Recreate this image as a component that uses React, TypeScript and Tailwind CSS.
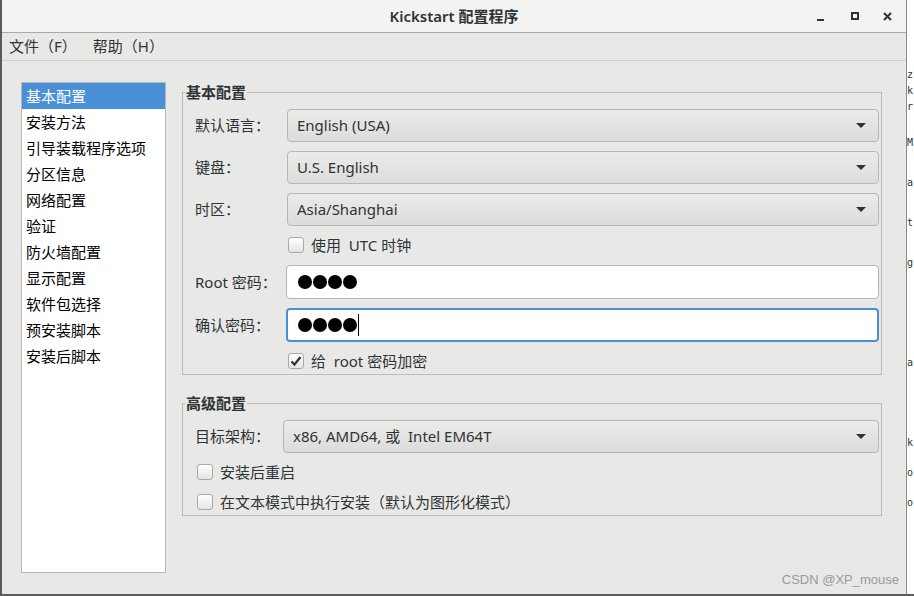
import React from 'react'

const font = "font-['Noto_Sans','Noto_Sans_CJK_SC',sans-serif]"

const navItems = [
  '基本配置',
  '安装方法',
  '引导装载程序选项',
  '分区信息',
  '网络配置',
  '验证',
  '防火墙配置',
  '显示配置',
  '软件包选择',
  '预安装脚本',
  '安装后脚本',
]

// bits of the terminal window sitting behind this one
const behind = [
  { c: 'z', h: 'h-[16px]' },
  { c: 'k', h: 'h-[16px]' },
  { c: 'r', h: 'h-[36px]' },
  { c: 'M', h: 'h-[40px]' },
  { c: 'a', h: 'h-[40px]' },
  { c: 't', h: 'h-[40px]' },
  { c: 'g', h: 'h-[100px]' },
  { c: 'a', h: 'h-[80px]' },
  { c: 'k', h: 'h-[30px]' },
  { c: 'o', h: 'h-[30px]' },
  { c: 'o', h: 'h-[16px]' },
]

function Arrow() {
  return (
    <svg width="10" height="6" viewBox="0 0 10 6" className="shrink-0">
      <path d="M0 0h10L5 5z" fill="#2e3436" />
    </svg>
  )
}

function Combo({ value }: { value: string }) {
  return (
    <div className="h-[33px] flex items-center justify-between pl-[9px] pr-[12px] rounded-[4px] border border-[#b6b6b3] bg-gradient-to-b from-[#ebebea] to-[#dcdcdb] text-[15px] text-[#2e3436]">
      <span className="whitespace-pre">{value}</span>
      <Arrow />
    </div>
  )
}

function Check({ checked, label }: { checked?: boolean; label: string }) {
  return (
    <div className="h-[20px] flex items-center gap-[7px] text-[15px] text-[#2e3436]">
      <div className="w-[16px] h-[16px] rounded-[3px] border border-[#a9a9a7] bg-gradient-to-b from-white to-[#e4e4e3] flex items-center justify-center">
        {checked && (
          <svg width="12" height="12" viewBox="0 0 12 12">
            <path d="M1.5 6.5l3 3 6-7.5" fill="none" stroke="#2e3436" strokeWidth="2.2" />
          </svg>
        )}
      </div>
      <span className="whitespace-pre">{label}</span>
    </div>
  )
}

function Dots({ cursor }: { cursor?: boolean }) {
  return (
    <div className="flex items-center gap-[1px]">
      {[0, 1, 2, 3].map(i => (
        <div key={i} className="w-[14px] h-[14px] rounded-full bg-black" />
      ))}
      {cursor && <div className="w-[1px] h-[22px] bg-black" />}
    </div>
  )
}

export default function App() {
  return (
    <div className={`w-[914px] h-[596px] overflow-hidden flex flex-col bg-[#d9d9d9] ${font}`}>
      <div className="flex h-[594px]">
        {/* main window */}
        <div className="w-[907px] flex flex-col border-l-2 border-r border-[#5a5a5a] border-r-[#8a8a8a] bg-[#e8e8e7]">
          {/* title bar */}
          <div className="h-[33px] shrink-0 relative flex items-center justify-center bg-[#f3f3f2] border-b border-[#a8a8a6]">
            <span className="text-[15px] font-semibold text-[#2e3436]">Kickstart 配置程序</span>
            <div className="absolute right-[14px] top-0 h-full flex items-center gap-[24px]">
              <div className="w-[10px] h-[10px] flex items-end">
                <div className="w-[7px] h-[2px] bg-[#2e3436]" />
              </div>
              <div className="w-[8px] h-[8px] border-2 border-[#2e3436]" />
              <svg width="9" height="9" viewBox="0 0 9 9">
                <path d="M1 1l7 7M8 1l-7 7" stroke="#2e3436" strokeWidth="2" />
              </svg>
            </div>
          </div>

          {/* menu bar */}
          <div className="h-[28px] shrink-0 flex items-center gap-[16px] pl-[7px] border-b border-[#cfcfcd] text-[15px] text-[#2e3436]">
            <span>文件（F）</span>
            <span>帮助（H）</span>
          </div>

          {/* body */}
          <div className="flex-1 flex pl-[19px] pt-[21px] relative">
            <div className="w-[145px] h-[491px] border border-[#b8b8b6] bg-white flex flex-col">
              {navItems.map((item, i) => (
                <div
                  key={item}
                  className={`h-[26px] leading-[26px] pl-[4px] text-[15px] ${
                    i === 0 ? 'bg-[#4a90d9] text-white' : 'text-black'
                  }`}
                >
                  {item}
                </div>
              ))}
            </div>

            <div className="ml-[16px] w-[700px] flex flex-col">
              {/* basic config */}
              <fieldset className="border border-[#bdbdbb] pl-[12px] pr-[2px] pb-[3px]">
                <legend className="-ml-[10px] px-[1px] h-[20px] leading-[20px] text-[15px] font-bold text-[#2e3436]">
                  基本配置
                </legend>
                <div className="grid grid-cols-[92px_1fr] items-center text-[15px] text-[#2e3436]">
                  <span className="mt-[7px]">默认语言：</span>
                  <div className="mt-[7px]"><Combo value="English (USA)" /></div>
                  <span className="mt-[9px]">键盘：</span>
                  <div className="mt-[9px]"><Combo value="U.S. English" /></div>
                  <span className="mt-[9px]">时区：</span>
                  <div className="mt-[9px]"><Combo value="Asia/Shanghai" /></div>
                  <span />
                  <div className="mt-[9px] pl-[1px]"><Check label="使用  UTC 时钟" /></div>
                  <span className="mt-[10px]">Root 密码：</span>
                  <div className="mt-[10px] -ml-[1px] h-[34px] rounded-[4px] border border-[#b6b6b3] bg-white flex items-center pl-[11px]">
                    <Dots />
                  </div>
                  <span className="mt-[9px]">确认密码：</span>
                  <div className="mt-[9px] -ml-[1px] h-[34px] rounded-[4px] border-2 border-[#4a90d9] bg-white flex items-center pl-[10px]">
                    <Dots cursor />
                  </div>
                  <span />
                  <div className="mt-[9px] pl-[1px]"><Check checked label="给  root 密码加密" /></div>
                </div>
              </fieldset>

              {/* advanced config */}
              <fieldset className="mt-[18px] border border-[#bdbdbb] pl-[12px] pr-[2px] pb-[3px]">
                <legend className="-ml-[10px] px-[1px] h-[20px] leading-[20px] text-[15px] font-bold text-[#2e3436]">
                  高级配置
                </legend>
                <div className="grid grid-cols-[88px_1fr] items-center mt-[7px] text-[15px] text-[#2e3436]">
                  <span>目标架构：</span>
                  <Combo value="x86, AMD64, 或  Intel EM64T" />
                </div>
                <div className="mt-[9px] pl-[2px]"><Check label="安装后重启" /></div>
                <div className="mt-[10px] pl-[2px]"><Check label="在文本模式中执行安装（默认为图形化模式）" /></div>
              </fieldset>
            </div>

            <span className="absolute right-[7px] bottom-[5px] text-[13px] text-[#9a9a9a] font-['Liberation_Sans',sans-serif]">
              CSDN @XP_mouse
            </span>
          </div>
        </div>

        {/* window behind, partly visible */}
        <div className="flex-1 bg-white overflow-hidden font-['DejaVu_Sans_Mono',monospace] text-[10px] text-[#333] leading-none">
          <div className="pt-[70px] flex flex-col">
            {behind.map((b, i) => (
              <span key={i} className={b.h}>
                {b.c}
              </span>
            ))}
          </div>
        </div>
      </div>
      <div className="h-[2px] bg-[#5a5a5a]" />
    </div>
  )
}
